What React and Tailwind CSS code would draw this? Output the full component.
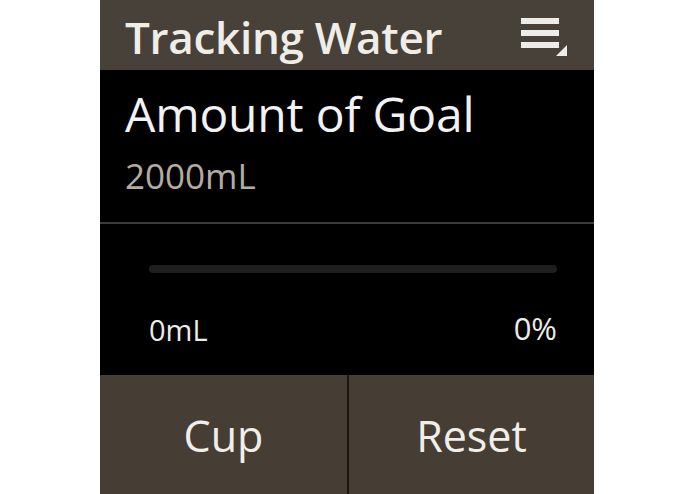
export default function App() {
  return (
    <div className="min-h-screen w-full bg-white pl-[100px]" style={{ fontFamily: '"Open Sans", "Noto Sans", sans-serif' }}>
      <div className="w-[494px] h-[494px] flex flex-col bg-black">
        <div className="h-[70px] shrink-0 bg-[#47413a] flex items-start justify-between pl-[25px] pr-[27px]">
          <div className="text-[#f0ede7] font-semibold text-[44px] leading-none tracking-[-0.3px] pt-[15px]">
            Tracking Water
          </div>
          <svg width="46" height="44" viewBox="0 0 46 44" className="mt-[15px]">
            <rect x="0" y="3" width="38" height="6" fill="#eeece8" />
            <rect x="0" y="15" width="38" height="6" fill="#eeece8" />
            <rect x="0" y="27" width="38" height="6" fill="#eeece8" />
            <polygon points="46,30 46,41 35,41" fill="#eeece8" />
          </svg>
        </div>

        <div className="h-[152px] shrink-0 flex flex-col px-[25px] pt-[20px]">
          <div className="text-[#f2f2f2] text-[48px] leading-none tracking-[-0.2px]">Amount of Goal</div>
          <div className="text-[#b5aca0] text-[35px] leading-none mt-[20px]">2000mL</div>
        </div>

        <div className="h-[2px] shrink-0 bg-[#3b3b3b]" />

        <div className="h-[151px] shrink-0 flex flex-col pl-[49px] pr-[37px] pt-[41px]">
          <div className="h-[8px] rounded-full bg-[#1f1f1f]" />
          <div className="mt-[40px] flex items-end justify-between text-[#ecebe8] leading-none">
            <span className="text-[29px]">0mL</span>
            <span className="text-[31px]">0%</span>
          </div>
        </div>

        <div className="flex-1 flex bg-[#463e35]">
          <button type="button" className="w-[247px] flex items-center justify-center text-[#f1eee9] text-[43px] leading-none pt-[1px]">
            Cup
          </button>
          <div className="w-[2px] bg-[#1c1712]" />
          <button type="button" className="flex-1 flex items-center justify-center text-[#f1eee9] text-[43px] leading-none pt-[1px]">
            Reset
          </button>
        </div>
      </div>
    </div>
  );
}
